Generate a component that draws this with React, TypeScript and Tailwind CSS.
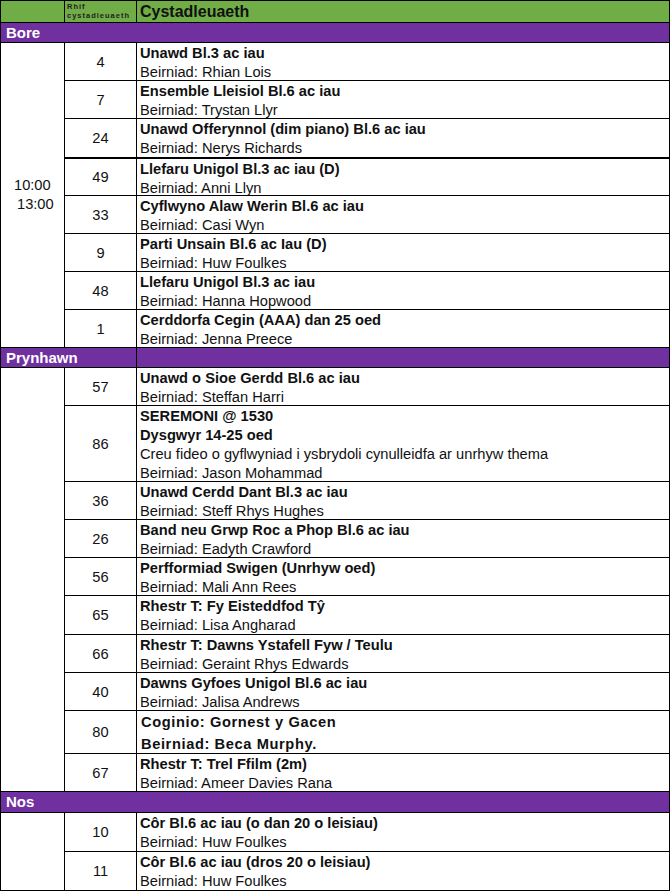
import React from "react";

type Line = { t: string; b?: boolean };
type Row = { n: string; h: string; lines: Line[]; thick?: boolean; spaced?: boolean };

const t = (title: string, judge: string): Line[] => [
  { t: title, b: true },
  { t: judge },
];

const bore: Row[] = [
  { n: "4", h: "h-[37px]", lines: t("Unawd Bl.3 ac iau", "Beirniad: Rhian Lois") },
  { n: "7", h: "h-[38px]", lines: t("Ensemble Lleisiol Bl.6 ac iau", "Beirniad: Trystan Llyr") },
  { n: "24", h: "h-[39px]", lines: t("Unawd Offerynnol (dim piano) Bl.6 ac iau", "Beirniad: Nerys Richards") },
  { n: "49", h: "h-[38px]", thick: true, lines: t("Llefaru Unigol Bl.3 ac iau (D)", "Beirniad: Anni Llyn") },
  { n: "33", h: "h-[38px]", lines: t("Cyflwyno Alaw Werin Bl.6 ac iau", "Beirniad: Casi Wyn") },
  { n: "9", h: "h-[38px]", lines: t("Parti Unsain Bl.6 ac Iau (D)", "Beirniad: Huw Foulkes") },
  { n: "48", h: "h-[38px]", lines: t("Llefaru Unigol Bl.3 ac iau", "Beirniad: Hanna Hopwood") },
  { n: "1", h: "h-[38px]", lines: t("Cerddorfa Cegin (AAA) dan 25 oed", "Beirniad: Jenna Preece") },
];

const prynhawn: Row[] = [
  { n: "57", h: "h-[37px]", lines: t("Unawd o Sioe Gerdd Bl.6 ac iau", "Beirniad: Steffan Harri") },
  {
    n: "86",
    h: "h-[76px]",
    lines: [
      { t: "SEREMONI @ 1530", b: true },
      { t: "Dysgwyr 14-25 oed", b: true },
      { t: "Creu fideo o gyflwyniad i ysbrydoli cynulleidfa ar unrhyw thema" },
      { t: "Beirniad: Jason Mohammad" },
    ],
  },
  { n: "36", h: "h-[38px]", lines: t("Unawd Cerdd Dant Bl.3 ac iau", "Beirniad: Steff Rhys Hughes") },
  { n: "26", h: "h-[38px]", lines: t("Band neu Grwp Roc a Phop Bl.6 ac iau", "Beirniad: Eadyth Crawford") },
  { n: "56", h: "h-[38px]", lines: t("Perfformiad Swigen (Unrhyw oed)", "Beirniad: Mali Ann Rees") },
  { n: "65", h: "h-[39px]", lines: t("Rhestr T: Fy Eisteddfod Tŷ", "Beirniad: Lisa Angharad") },
  { n: "66", h: "h-[38px]", lines: t("Rhestr T: Dawns Ystafell Fyw / Teulu", "Beirniad: Geraint Rhys Edwards") },
  { n: "40", h: "h-[38px]", lines: t("Dawns Gyfoes Unigol Bl.6 ac iau", "Beirniad: Jalisa Andrews") },
  {
    n: "80",
    h: "h-[43px]",
    spaced: true,
    lines: [
      { t: "Coginio: Gornest y Gacen", b: true },
      { t: "Beirniad: Beca Murphy.", b: true },
    ],
  },
  { n: "67", h: "h-[38px]", lines: t("Rhestr T: Trel Ffilm (2m)", "Beirniad: Ameer Davies Rana") },
];

const nos: Row[] = [
  { n: "10", h: "h-[38px]", lines: t("Côr Bl.6 ac iau (o dan 20 o leisiau)", "Beirniad: Huw Foulkes") },
  { n: "11", h: "h-[39px]", lines: t("Côr Bl.6 ac iau (dros 20 o leisiau)", "Beirniad: Huw Foulkes") },
];

function RowView({ r, first }: { r: Row; first: boolean }) {
  const border = first ? "" : r.thick ? "border-t-2 border-black" : "border-t border-black";
  return (
    <div className={`flex ${r.h} ${border}`}>
      <div className="w-[72px] shrink-0 border-r border-black flex items-center justify-center text-[14.67px]">
        {r.n}
      </div>
      <div
        className={`flex-1 text-[14.67px] whitespace-nowrap ${
          r.spaced ? "leading-[22px] tracking-[0.6px] pl-[4px]" : "leading-[19px] pl-[3px] pt-[1px]"
        }`}
      >
        {r.lines.map((l, i) => (
          <div key={i} className={l.b ? "font-bold" : ""}>
            {l.t}
          </div>
        ))}
      </div>
    </div>
  );
}

function Band({ label, split, h }: { label: string; split?: boolean; h: string }) {
  return (
    <div className={`flex ${h} border-t border-black bg-[#7030a0] text-white font-bold text-[15px] leading-[19px]`}>
      <div className={`w-[136px] shrink-0 pl-[5px] whitespace-nowrap ${split ? "border-r border-black" : ""}`}>
        {label}
      </div>
      <div className="flex-1" />
    </div>
  );
}

function Block({ rows, time }: { rows: Row[]; time?: boolean }) {
  return (
    <div className="flex border-t border-black">
      <div className="w-[64px] shrink-0 border-r border-black flex flex-col justify-center text-[14.67px] leading-[19px]">
        {time && (
          <>
            <div className="pl-[13px]">10:00</div>
            <div className="pl-[16px]">13:00</div>
          </>
        )}
      </div>
      <div className="flex-1 flex flex-col">
        {rows.map((r, i) => (
          <RowView key={r.n} r={r} first={i === 0} />
        ))}
      </div>
    </div>
  );
}

export default function App() {
  return (
    <div className="bg-white w-[671px] h-[892px]">
      <div className="w-[670px] border-x border-b border-black font-['Liberation_Sans',Arial,sans-serif] text-[#111]">
        <div className="flex h-[22px] border-t border-black bg-[#70ad47]">
          <div className="w-[64px] shrink-0 border-r border-black" />
          <div className="w-[72px] shrink-0 border-r border-black pl-[2px] pt-[1px] text-[7.5px] leading-[9px] tracking-[1px] font-bold text-[#222]">
            <div>Rhif</div>
            <div>cystadleuaeth</div>
          </div>
          <div className="flex-1 pl-[3px] pt-[1px] font-bold text-[16px] leading-[20px]">Cystadleuaeth</div>
        </div>
        <Band label="Bore" h="h-[20px]" />
        <Block rows={bore} time />
        <Band label="Prynhawn" split h="h-[20px]" />
        <Block rows={prynhawn} />
        <Band label="Nos" h="h-[21px]" />
        <Block rows={nos} />
      </div>
    </div>
  );
}
